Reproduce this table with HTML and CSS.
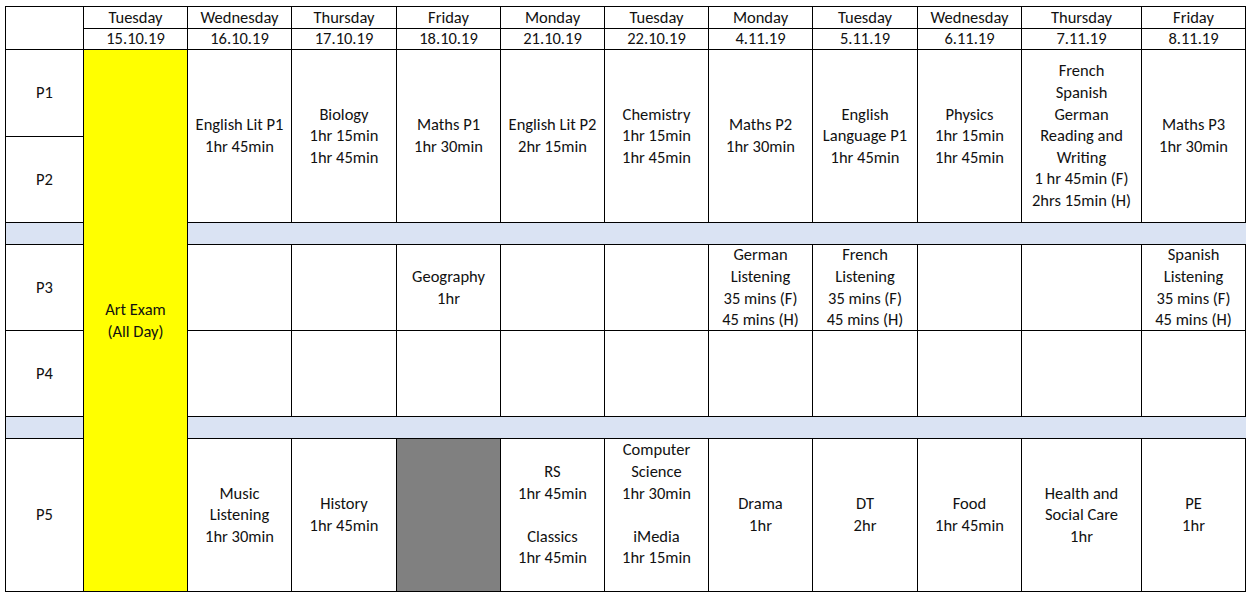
FILE: index.html
```html
<!DOCTYPE html>
<html lang="en">
<head>
<meta charset="utf-8">
<title>Exam Timetable</title>
<link rel="stylesheet" href="styles.css">
</head>
<body>
<div class="timetable">
  <div class="cell corner"></div>
  <div class="cell r1">Tuesday</div>
  <div class="cell r1">Wednesday</div>
  <div class="cell r1">Thursday</div>
  <div class="cell r1">Friday</div>
  <div class="cell r1">Monday</div>
  <div class="cell r1">Tuesday</div>
  <div class="cell r1">Monday</div>
  <div class="cell r1">Tuesday</div>
  <div class="cell r1">Wednesday</div>
  <div class="cell r1">Thursday</div>
  <div class="cell r1">Friday</div>

  <div class="cell r2">15.10.19</div>
  <div class="cell r2">16.10.19</div>
  <div class="cell r2">17.10.19</div>
  <div class="cell r2">18.10.19</div>
  <div class="cell r2">21.10.19</div>
  <div class="cell r2">22.10.19</div>
  <div class="cell r2">4.11.19</div>
  <div class="cell r2">5.11.19</div>
  <div class="cell r2">6.11.19</div>
  <div class="cell r2">7.11.19</div>
  <div class="cell r2">8.11.19</div>

  <div class="cell r3">P1</div>
  <div class="cell art">Art Exam<br>(All Day)</div>
  <div class="cell dbl">English Lit P1<br>1hr 45min</div>
  <div class="cell dbl">Biology<br>1hr 15min<br>1hr 45min</div>
  <div class="cell dbl">Maths P1<br>1hr 30min</div>
  <div class="cell dbl">English Lit P2<br>2hr 15min</div>
  <div class="cell dbl">Chemistry<br>1hr 15min<br>1hr 45min</div>
  <div class="cell dbl">Maths P2<br>1hr 30min</div>
  <div class="cell dbl">English<br>Language P1<br>1hr 45min</div>
  <div class="cell dbl">Physics<br>1hr 15min<br>1hr 45min</div>
  <div class="cell dbl">French<br>Spanish<br>German<br>Reading and<br>Writing<br>1 hr 45min (F)<br>2hrs 15min (H)</div>
  <div class="cell dbl">Maths P3<br>1hr 30min</div>
  <div class="cell r4">P2</div>

  <div class="cell r5 sep"></div>
  <div class="cell r5 sep wide"></div>

  <div class="cell r6">P3</div>
  <div class="cell r6"></div>
  <div class="cell r6"></div>
  <div class="cell r6">Geography<br>1hr</div>
  <div class="cell r6"></div>
  <div class="cell r6"></div>
  <div class="cell r6">German<br>Listening<br>35 mins (F)<br>45 mins (H)</div>
  <div class="cell r6">French<br>Listening<br>35 mins (F)<br>45 mins (H)</div>
  <div class="cell r6"></div>
  <div class="cell r6"></div>
  <div class="cell r6">Spanish<br>Listening<br>35 mins (F)<br>45 mins (H)</div>

  <div class="cell r7">P4</div>
  <div class="cell r7"></div>
  <div class="cell r7"></div>
  <div class="cell r7"></div>
  <div class="cell r7"></div>
  <div class="cell r7"></div>
  <div class="cell r7"></div>
  <div class="cell r7"></div>
  <div class="cell r7"></div>
  <div class="cell r7"></div>
  <div class="cell r7"></div>
  <div class="cell r7"></div>

  <div class="cell r8 sep"></div>
  <div class="cell r8 sep wide"></div>

  <div class="cell r9">P5</div>
  <div class="cell r9">Music<br>Listening<br>1hr 30min</div>
  <div class="cell r9">History<br>1hr 45min</div>
  <div class="cell r9 grey"></div>
  <div class="cell r9">RS<br>1hr 45min<br><br>Classics<br>1hr 45min</div>
  <div class="cell r9">Computer<br>Science<br>1hr 30min<br><br>iMedia<br>1hr 15min<br>&nbsp;</div>
  <div class="cell r9">Drama<br>1hr</div>
  <div class="cell r9">DT<br>2hr</div>
  <div class="cell r9">Food<br>1hr 45min</div>
  <div class="cell r9">Health and<br>Social Care<br>1hr</div>
  <div class="cell r9">PE<br>1hr</div>
</div>
</body>
</html>
```

FILE: styles.css
```css
html, body {
  background: #ffffff;
}
body {
  margin: 6px 0 0 5px;
  font-family: "Carlito", "Lato", "Liberation Sans", sans-serif;
  font-size: 16.5px;
  color: #111111;
}
.timetable {
  display: grid;
  width: 1241px;
  box-sizing: border-box;
  grid-template-columns: 77px 103px 103px 104px 103px 103px 103px 103px 104px 103px 119px 103px;
  grid-template-rows: 21px 20px 86px 85px 21px 85px 85px 21px 152px;
  gap: 1px;
  padding: 1px;
  background: #000000;
}
.cell {
  background: #ffffff;
  display: flex;
  align-items: center;
  justify-content: center;
  text-align: center;
  line-height: 21.6px;
  white-space: nowrap;
  overflow: visible;
}
.r1 { grid-row: 1; }
.r2 { grid-row: 2; }
.r3 { grid-row: 3; }
.r4 { grid-row: 4; }
.r5 { grid-row: 5; }
.r6 { grid-row: 6; }
.r7 { grid-row: 7; }
.r8 { grid-row: 8; }
.r9 { grid-row: 9; }
.corner {
  grid-row: 1 / span 2;
  grid-column: 1;
}
.art {
  grid-row: 3 / span 7;
  grid-column: 2;
  background: #ffff00;
}
.dbl {
  grid-row: 3 / span 2;
}
.sep {
  background: #dae3f3;
}
.wide {
  grid-column: span 11;
}
.grey {
  background: #808080;
}
```
